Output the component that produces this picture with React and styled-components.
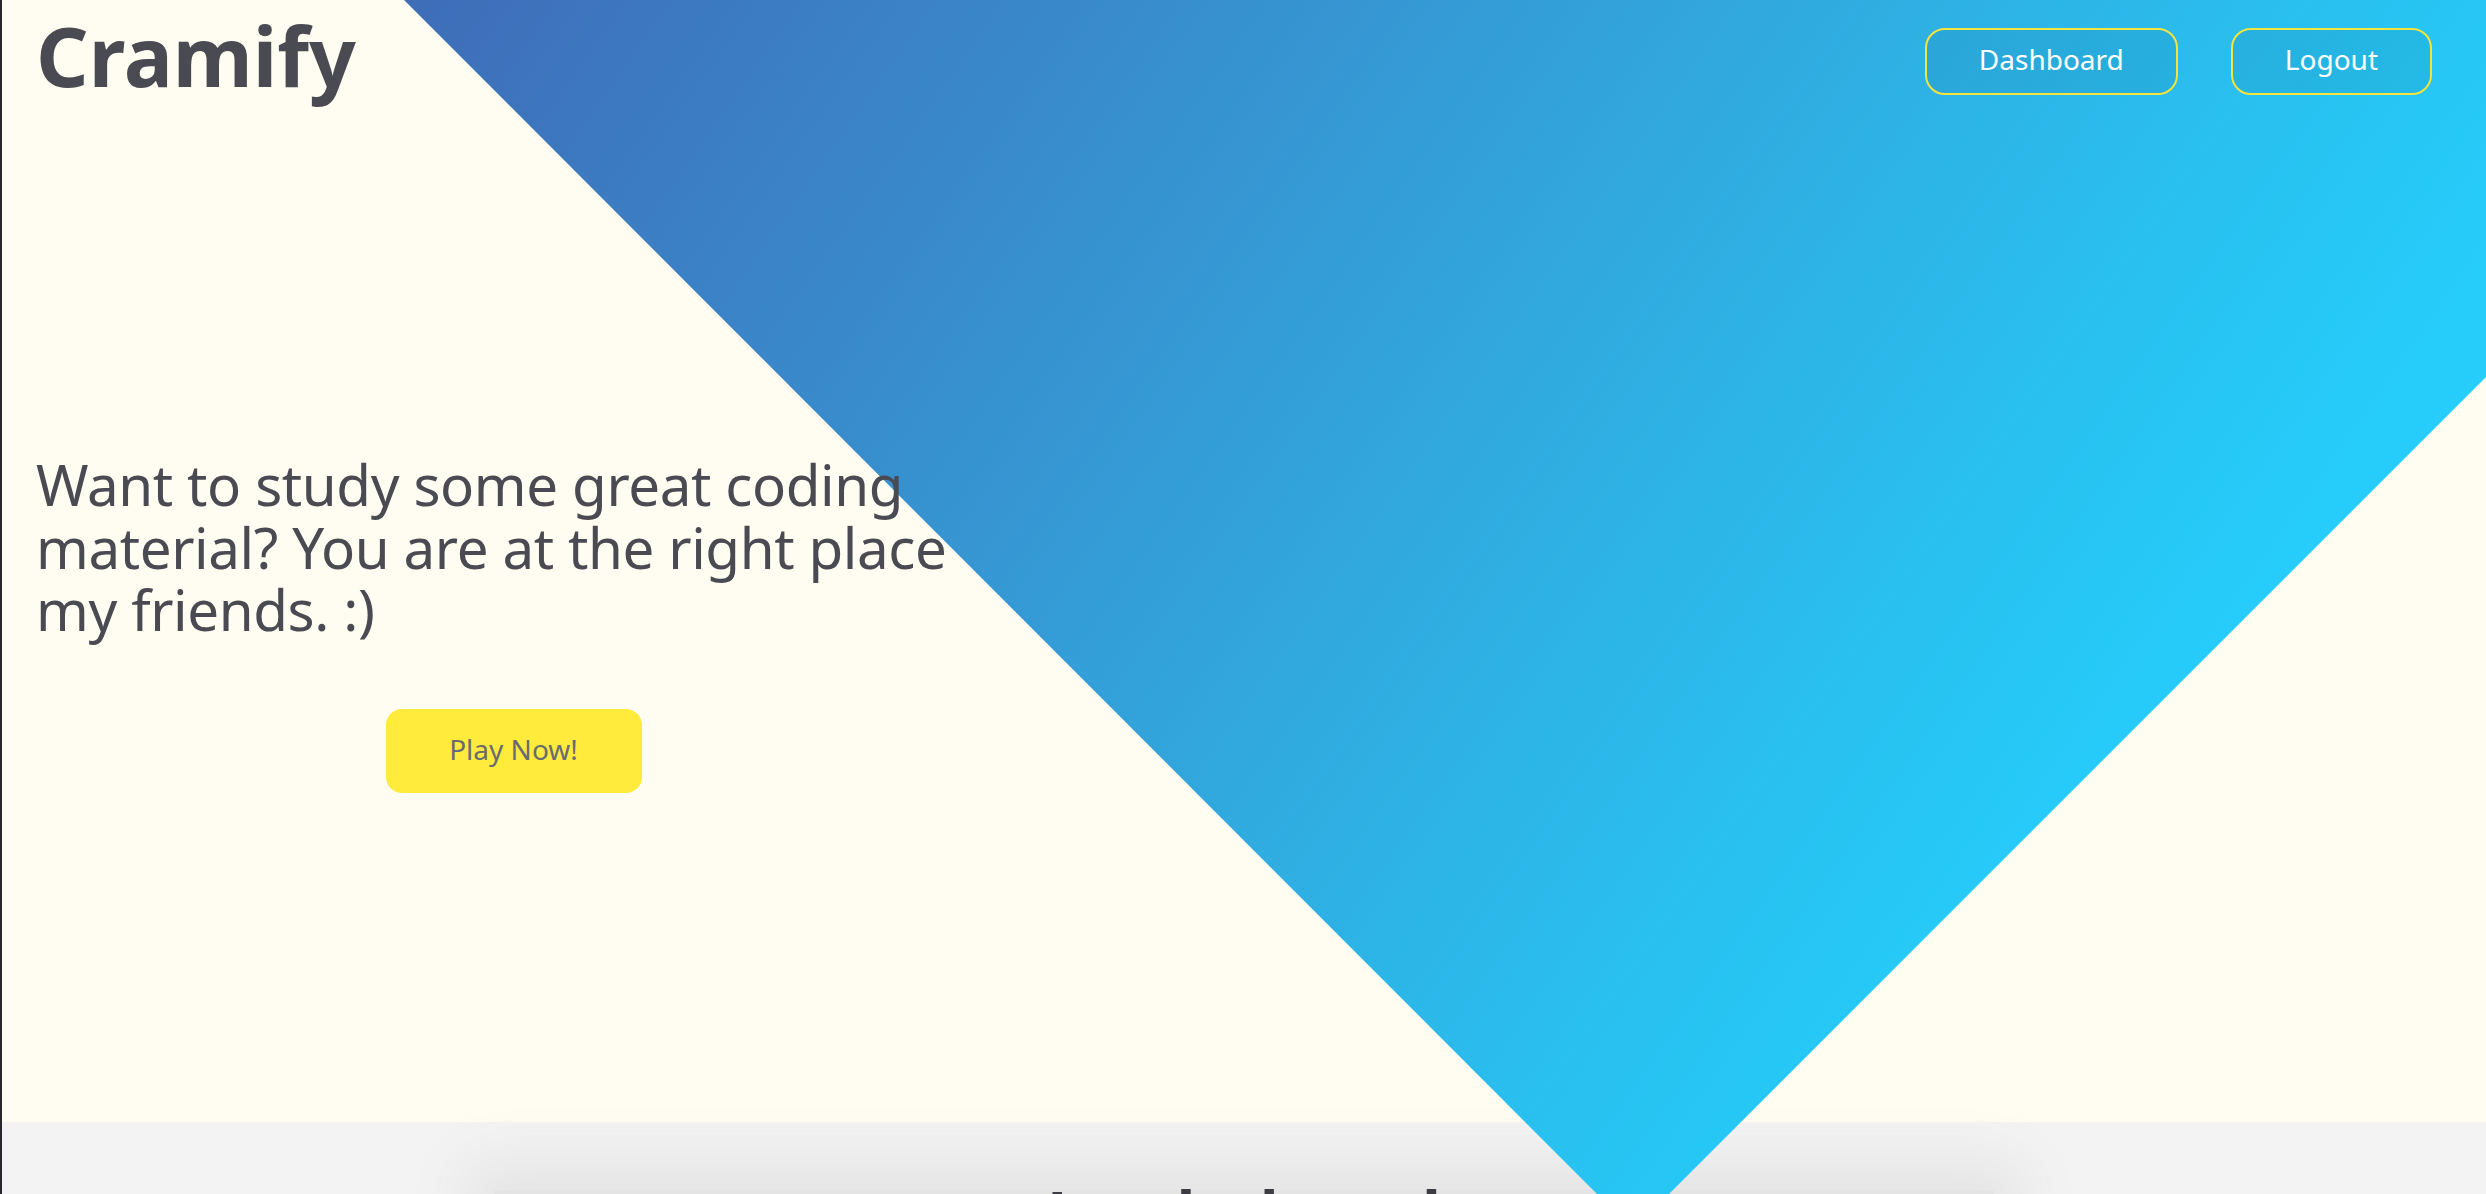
import React from "react";
import styled, { createGlobalStyle } from "styled-components";

const GlobalStyle = createGlobalStyle`
  html, body {
    margin: 0;
    padding: 0;
    background: #f3f3f4;
  }
  body {
    font-family: "Noto Sans", "Open Sans", sans-serif;
  }
`;

const Page = styled.div`
  position: relative;
  min-height: 1194px;
  border-left: 2px solid #27272c;
  overflow: hidden;
`;

// big blue wedge that sits over both sections
const Wedge = styled.div`
  position: absolute;
  top: 0;
  left: 0;
  width: 100%;
  height: 1240px;
  background: linear-gradient(
    125deg,
    #4560ad 0%,
    #3f6db8 12%,
    #3a86c8 30%,
    #2fafe3 57%,
    #27c5f3 73%,
    #26cdfb 81%,
    #22d4ff 100%
  );
  clip-path: polygon(402px 0, 100% 0, 100% 377px, 1631px 1230px);
  pointer-events: none;
`;

const Hero = styled.section`
  height: 1122px;
  background: #fffdf1;
`;

const Content = styled.div`
  position: relative;
  z-index: 1;
`;

const Header = styled.header`
  display: flex;
  justify-content: space-between;
  align-items: flex-start;
  padding: 14px 54px 0 34px;
`;

const Logo = styled.h1`
  margin: 0;
  font-size: 82px;
  line-height: 82px;
  font-weight: 700;
  color: #4a4a53;
`;

const Nav = styled.nav`
  display: flex;
  gap: 53px;
  margin-top: 14px;
`;

const NavButton = styled.button`
  height: 67px;
  padding: 0 52px 5px;
  border: 2px solid #f4e43c;
  border-radius: 20px;
  background: rgba(16, 90, 130, 0.12);
  color: #ffffff;
  font-family: inherit;
  font-size: 28px;
  cursor: pointer;
`;

const HeroBody = styled.div`
  display: flex;
  flex-direction: column;
  width: 955px;
  margin: 358px 0 0 34px;
`;

const Headline = styled.h2`
  margin: 0;
  font-size: 56.5px;
  line-height: 62.5px;
  font-weight: 400;
  color: #4a4a53;
  letter-spacing: -0.4px;
`;

const PlayButton = styled.button`
  align-self: center;
  margin-top: 67px;
  width: 256px;
  height: 84px;
  padding-bottom: 5px;
  border: none;
  border-radius: 16px;
  background: #ffeb3b;
  color: #6a6a72;
  font-family: inherit;
  font-size: 28px;
  cursor: pointer;
`;

const Section = styled.section`
  background: #f3f3f4;
  padding-top: 68px;
  display: flex;
  justify-content: center;
`;

const Card = styled.div`
  width: 1500px;
  min-height: 300px;
  background: #e4e4e4;
  box-shadow: 0 0 56px 28px #e4e4e4;
  display: flex;
  justify-content: center;
`;

const CardTitle = styled.h3`
  margin: -14px 0 0;
  font-size: 62px;
  line-height: 1.2;
  font-weight: 700;
  color: #3c3c42;
`;

export default function App() {
  return (
    <>
      <GlobalStyle />
      <Page>
        <Wedge />
        <Hero>
          <Content>
            <Header>
              <Logo>Cramify</Logo>
              <Nav>
                <NavButton>Dashboard</NavButton>
                <NavButton>Logout</NavButton>
              </Nav>
            </Header>
            <HeroBody>
              <Headline>
                Want to study some great coding
                <br />
                material? You are at the right place
                <br />
                my friends. :)
              </Headline>
              <PlayButton>Play Now!</PlayButton>
            </HeroBody>
          </Content>
        </Hero>
        <Section>
          <Card>
            <CardTitle>Leaderboard</CardTitle>
          </Card>
        </Section>
      </Page>
    </>
  );
}
